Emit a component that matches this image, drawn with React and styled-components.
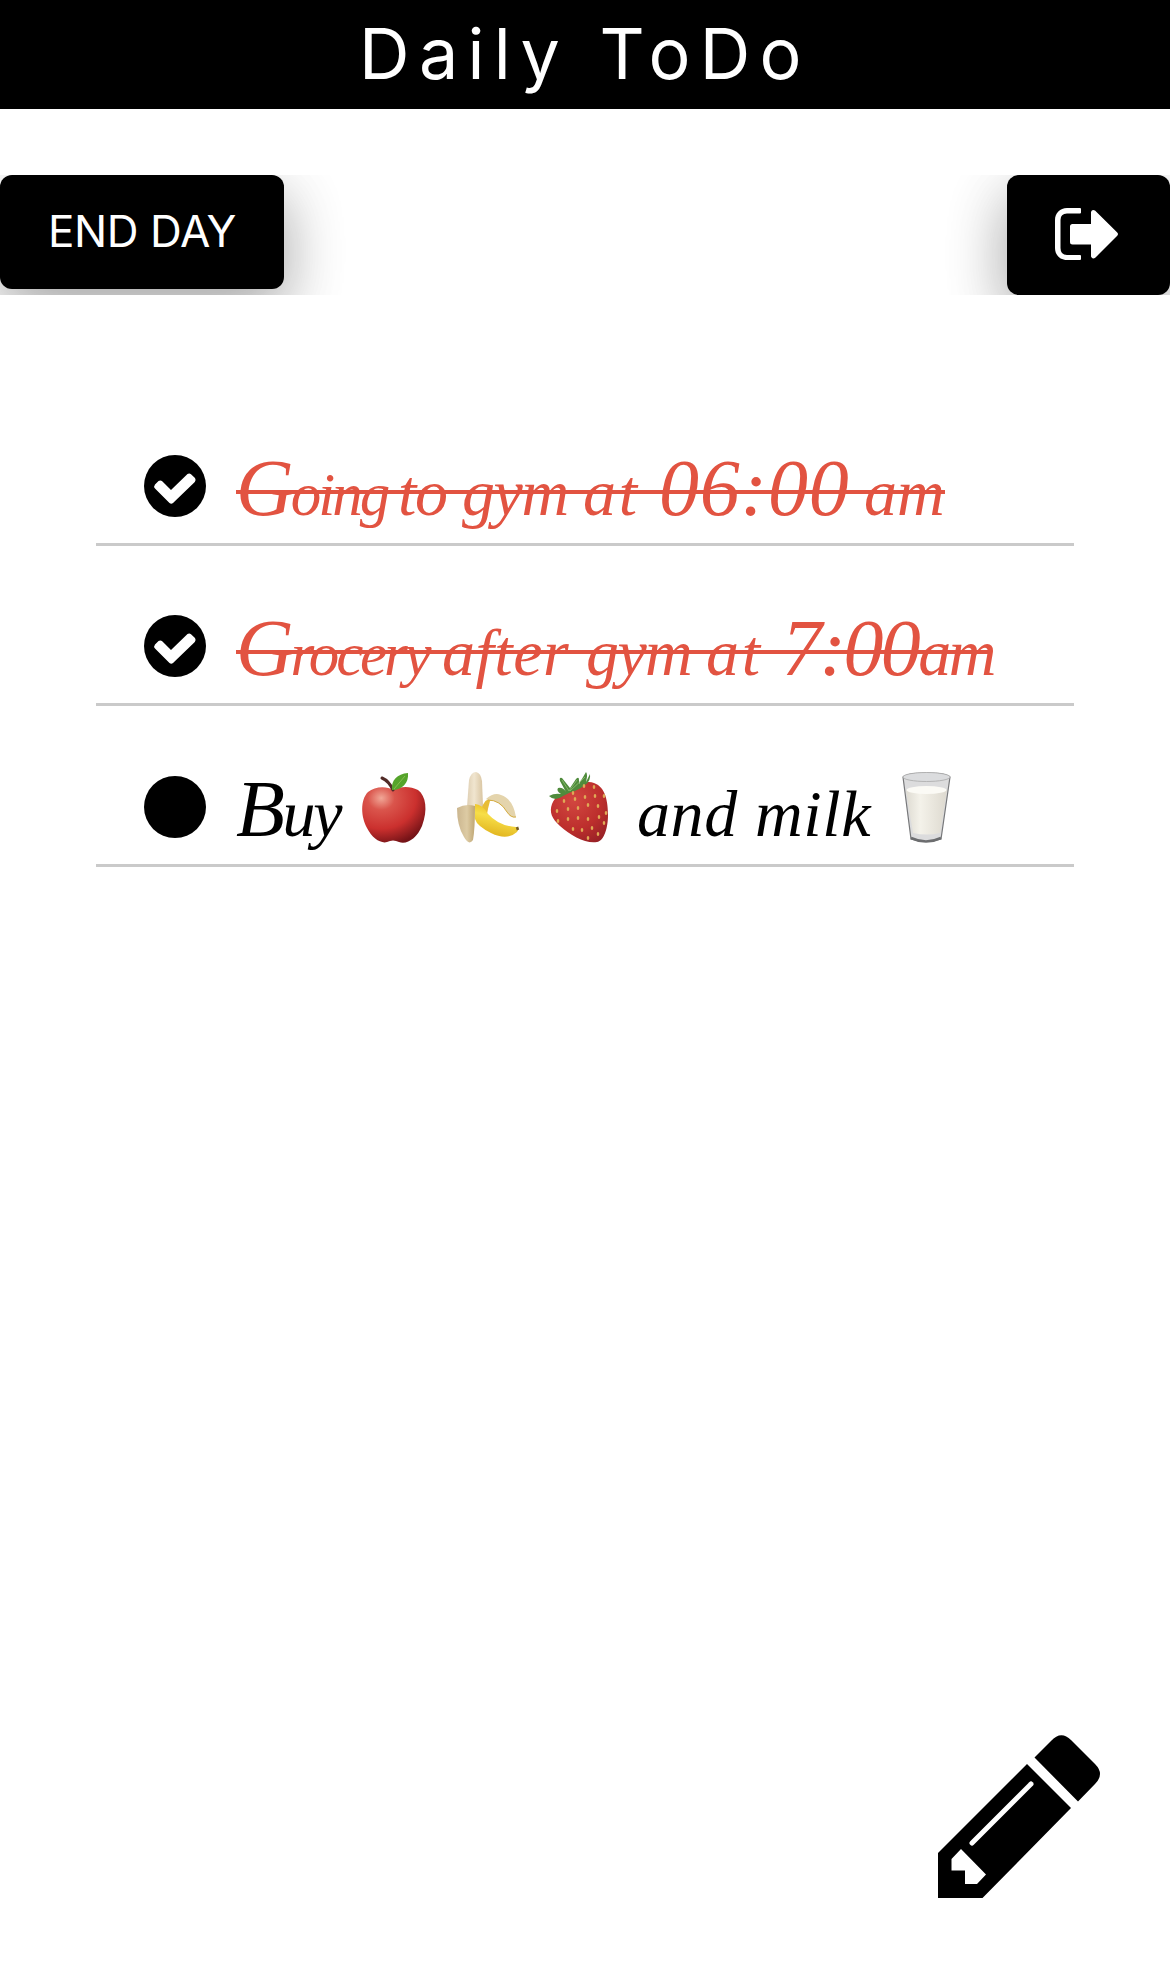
import React from "react";
import styled, { createGlobalStyle } from "styled-components";

const GlobalStyle = createGlobalStyle`
  * { box-sizing: border-box; }
  body { margin: 0; background: #fff; }
`;

const Page = styled.div`
  display: flex;
  flex-direction: column;
  height: 1968px;
  overflow: hidden;
  background: #fff;
  color: #000;
  font-family: Inter, "Liberation Sans", sans-serif;
`;

const Header = styled.header`
  display: flex;
  justify-content: center;
  height: 109px;
  background: #000;
`;

const Title = styled.h1`
  margin: 0;
  color: #fff;
  font-size: 70px;
  font-weight: 400;
  line-height: 108px;
  letter-spacing: 9.3px;
  word-spacing: 1.5px;
  white-space: nowrap;
`;

const Toolbar = styled.nav`
  display: flex;
  justify-content: space-between;
  align-items: flex-start;
  height: 120px;
  margin-top: 66px;
  overflow: hidden;
`;

const Button = styled.button`
  display: flex;
  align-items: center;
  justify-content: center;
  width: ${(p) => p.$width}px;
  height: ${(p) => p.$height}px;
  padding: ${(p) => p.$padding};
  border: 0;
  border-radius: 12px;
  background: #000;
  color: #fff;
  font-family: inherit;
  font-size: 44px;
  line-height: 1;
  letter-spacing: -0.4px;
  box-shadow: 0 24px 60px rgba(0, 0, 0, 0.2), 0 18px 64px rgba(0, 0, 0, 0.19);
`;

const List = styled.ul`
  display: flex;
  flex-direction: column;
  margin: 90px 96px 0;
  padding: 0;
  list-style: none;
`;

const Item = styled.li`
  display: flex;
  align-items: flex-end;
  height: 160.5px;
  padding: 0 0 26px 48px;
  gap: 30px;
  border-bottom: 3px solid #cacaca;
`;

const Ink = styled.div`
  position: relative;
  display: flex;
  align-items: baseline;
  height: 86px;
  margin-bottom: -19px;
  color: ${(p) => (p.$done ? "#e25341" : "#000")};
  font-family: "Liberation Serif", serif;
  font-style: italic;
  font-size: 66px;
  line-height: 86px;
  white-space: pre;

  &::after {
    content: "";
    display: ${(p) => (p.$done ? "block" : "none")};
    position: absolute;
    left: 0;
    right: 0;
    top: 40px;
    height: 4px;
    background: #e25341;
  }
`;

const Word = styled.span`
  width: ${(p) => p.$width}px;
  font-size: ${(p) => p.$size || 66}px;
  letter-spacing: ${(p) => p.$spacing}px;
`;

const Tall = styled.span`
  font-size: 80px;
  line-height: 1px;
`;

const Emoji = styled.svg`
  width: 75px;
  height: 75px;
  margin-top: 1px;
  margin-right: ${(p) => p.$gap || 0}px;
  align-self: flex-start;
  overflow: visible;
`;

const Footer = styled.footer`
  display: flex;
  justify-content: flex-end;
  margin-top: auto;
  padding: 0 70px 70px 0;
`;

const StatusIcon = ({ done }) => (
  <svg width="62" height="62" viewBox="0 0 62 62">
    <circle cx="31" cy="31" r="31" />
    {done && (
      <path
        fill="#fff"
        d="M11 29.5 L14.5 26 Q16.5 24.8 18.5 26.4 L27 35 L43.5 19 Q45.3 17.8 47 19.2 L51 23 Q52.3 25 50.8 27 L29 48 Q27.3 49.5 25.5 48 L11 33.5 Q9.4 31.5 11 29.5Z"
      />
    )}
  </svg>
);

const ExitIcon = () => (
  <svg width="64" height="52" viewBox="0 0 64 52" fill="#fff">
    <path d="M25 0H12C5 0 0 5 0 12V40C0 47 5 52 12 52H25Q26 52 26 51V48Q26 47 25 47H12Q5.500 47 5.500 40V12Q5.500 5.500 12 5.500H25Q26 5.500 26 4.500V1Q26 0 25 0Z" />
    <path d="M17.500 16H36V4Q37 .8 40 2.500L62 24.200Q64 26 62 28L40.500 49.500Q37.500 52 36 48.500V36.500H17.500Q15 36.500 15 34V18.500Q15 16 17.500 16Z" />
  </svg>
);

const PencilIcon = () => (
  <svg width="162" height="163" viewBox="0 0 162 163">
    <path d="M96.500 22.500 L113 6 Q123-5 133 5 L157 29 Q167 39 157 49 L140 66.500Z" />
    <path
      fillRule="evenodd"
      d="M89 29 L133 73 L44.500 163 H0 V118Z M23 114 L13.500 124 V135.500 H27 V149 H39 L48 139.500Z"
    />
    <path d="M34 108 L93 49" stroke="#fff" strokeWidth="5" strokeLinecap="round" />
  </svg>
);

const Apple = () => (
  <Emoji viewBox="0 0 75 75" role="img" aria-label="apple" $gap={18}>
    <defs>
      <radialGradient id="apple" cx=".3" cy=".2" r=".85">
        <stop offset="0" stopColor="#f1a797" />
        <stop offset=".25" stopColor="#da554c" />
        <stop offset=".65" stopColor="#cb302e" />
        <stop offset="1" stopColor="#751317" />
      </radialGradient>
    </defs>
    <path fill="url(#apple)" d="M35 18C29 14 17 14 10 20C2 28 3 45 9 56C14 66 23 72 29 70Q35 67 41 70C49 73 59 66 64 54C70 38 68 24 60 18C52 14 43 14 35 18Z" />
    <path d="M24 6Q31 9 35 18" fill="none" stroke="#512b27" strokeWidth="3" strokeLinecap="round" />
    <path fill="#55a42b" d="M34 18C33 8 39 2 50 1C51 11 44 18 34 18Z" />
    <path d="M36 17L47 4" stroke="#86bf50" strokeWidth="1" />
  </Emoji>
);

const Banana = () => (
  <Emoji viewBox="0 0 75 75" role="img" aria-label="banana" $gap={18}>
    <defs>
      <linearGradient id="peel" x1="0" y1="0" x2="1" y2="0">
        <stop stopColor="#cbb68f" />
        <stop offset=".55" stopColor="#ddcba4" />
        <stop offset="1" stopColor="#bfa673" />
      </linearGradient>
      <linearGradient id="flesh" x1="0" y1="0" x2="1" y2="0">
        <stop stopColor="#dfcfb3" />
        <stop offset=".45" stopColor="#f0e5cf" />
        <stop offset="1" stopColor="#d9c5a1" />
      </linearGradient>
      <linearGradient id="banana" x1=".6" y1="0" x2=".3" y2="1">
        <stop stopColor="#e8b91d" />
        <stop offset=".4" stopColor="#f7de48" />
        <stop offset="1" stopColor="#dfb01a" />
      </linearGradient>
    </defs>
    <path fill="url(#flesh)" d="M16 35L18 8Q20 0 25 0Q30 1 31 9L32 34Q29 40 16 35Z" />
    <path fill="#e8bd35" d="M30 37Q34 26 43 25L52 29Q44 27 39 29Q37 36 36 42Z" />
    <path fill="#e4d4ac" d="M35 27Q43 20 50 23Q62 27 65 45Q60 47 56 40Q48 28 37 28Z" />
    <path d="M37 28Q49 28 56 40Q60 46 65 45" fill="none" stroke="#d5ad42" strokeWidth="1" />
    <path fill="url(#banana)" d="M24 32Q31 32 37 42Q48 54 65 55Q69 56 66 60Q56 69 40 61Q26 54 24 47Z" />
    <path fill="url(#peel)" d="M6 36Q15 31 24 34Q24 57 22 68Q18 74 13 65Q6 54 6 36Z" />
    <path d="M66 55L67 58" stroke="#735b24" strokeWidth="2.500" />
  </Emoji>
);

const seeds = [[40, 14], [50, 15], [29, 21], [20, 29], [31, 27], [41, 25], [51, 24], [60, 24], [13, 39], [24, 37], [34, 36], [44, 33], [54, 34], [62, 41], [14, 49], [24, 47], [34, 46], [44, 47], [55, 45], [29, 57], [38, 58], [48, 56], [60, 51], [44, 66], [54, 62]];

const Strawberry = () => (
  <Emoji viewBox="0 0 75 75" role="img" aria-label="strawberry" $gap={18}>
    <defs>
      <radialGradient id="berry" cx=".4" cy=".3" r=".8">
        <stop stopColor="#d24740" />
        <stop offset=".6" stopColor="#bd2f2d" />
        <stop offset="1" stopColor="#982126" />
      </radialGradient>
    </defs>
    <path fill="url(#berry)" d="M8 32C11 24 19 20 26 18C34 12 43 8 50 11C62 15 64 31 64 43C64 56 60 69 53 70C42 72 27 64 16 54C8 47 5 40 8 32Z" />
    <path fill="#4f8b3c" d="M22 20L16 9Q15 5 18 6L26 16L32 7Q35 4 35 8L35 12L42 0Q44 2 42 10L46 2Q47 9 41 13Q33 19 27 20L19 24Q11 30 5 24Q10 21 17 22Q12 19 14 16Q19 15 22 20Z" />
    <path d="M18 8L25 19L33 8M26 19L41 5" fill="none" stroke="#83b568" strokeWidth="1" />
    {seeds.map(([x, y]) => (
      <ellipse key={`${x}-${y}`} cx={x} cy={y} rx="1.300" ry="2" fill="#e0a955" />
    ))}
  </Emoji>
);

const Milk = () => (
  <Emoji viewBox="0 0 75 75" role="img" aria-label="glass of milk">
    <defs>
      <linearGradient id="milk" x1="0" x2="1">
        <stop stopColor="#dedbd2" />
        <stop offset=".35" stopColor="#f4f2ea" />
        <stop offset="1" stopColor="#ddd9cf" />
      </linearGradient>
    </defs>
    <path fill="#dcdcdd" stroke="#77787a" strokeWidth="1.200" d="M14 5L22 67Q37 72 52 67L61 5Q58 1 38 1Q17 1 14 5Z" />
    <path fill="url(#milk)" d="M17 18L24 61Q38 64 51 61L58 18Q38 13 17 18Z" />
    <ellipse cx="37.500" cy="18" rx="20" ry="4" fill="#fbfaf5" />
    <ellipse cx="37.500" cy="5" rx="23.500" ry="4.500" fill="#dbdcde" stroke="#aaa" strokeWidth=".8" />
    <path d="M22 66Q37 73 52 66" fill="none" stroke="#6c6d6f" strokeWidth="2.500" />
  </Emoji>
);

const tasks = [
  {
    done: true,
    parts: [
      { tall: "G", text: "oing ", width: 162, spacing: -3, size: 61 },
      { text: "to ", width: 64, spacing: -1.3 },
      { text: "gym ", width: 121, spacing: -1.4 },
      { text: "at ", width: 76, spacing: 2.7 },
      { tall: "06:00", text: " ", width: 205, spacing: 0.8 },
      { text: "am", width: 81, spacing: 0 },
    ],
  },
  {
    done: true,
    parts: [
      { tall: "G", text: "rocery ", width: 206, spacing: -3.2, size: 61 },
      { text: "after ", width: 144, spacing: 0.5 },
      { text: "gym ", width: 120, spacing: -1.6 },
      { text: "at ", width: 76, spacing: 2.7 },
      { tall: "7:00", text: "am", width: 210, spacing: -2.6 },
    ],
  },
  {
    done: false,
    parts: [
      { tall: "B", text: "uy ", width: 122, spacing: -2.3 },
      { icon: Apple },
      { icon: Banana },
      { icon: Strawberry },
      { text: "and ", width: 118, spacing: 0.6 },
      { text: "milk ", width: 134, spacing: 0.6 },
      { icon: Milk },
    ],
  },
];

export default function App() {
  return (
    <Page>
      <GlobalStyle />
      <Header>
        <Title>Daily ToDo</Title>
      </Header>
      <Toolbar>
        <Button $width={284} $height={114} $padding="0 0 2px">END DAY</Button>
        <Button $width={163} $height={120} $padding="0 4px 3px 0" aria-label="Log out">
          <ExitIcon />
        </Button>
      </Toolbar>
      <List>
        {tasks.map((task, i) => (
          <Item key={i}>
            <StatusIcon done={task.done} />
            <Ink $done={task.done}>
              {task.parts.map((part, j) =>
                part.icon ? (
                  <part.icon key={j} />
                ) : (
                  <Word key={j} $width={part.width} $spacing={part.spacing} $size={part.size}>
                    {part.tall && <Tall>{part.tall}</Tall>}
                    {part.text}
                  </Word>
                )
              )}
            </Ink>
          </Item>
        ))}
      </List>
      <Footer>
        <PencilIcon />
      </Footer>
    </Page>
  );
}
